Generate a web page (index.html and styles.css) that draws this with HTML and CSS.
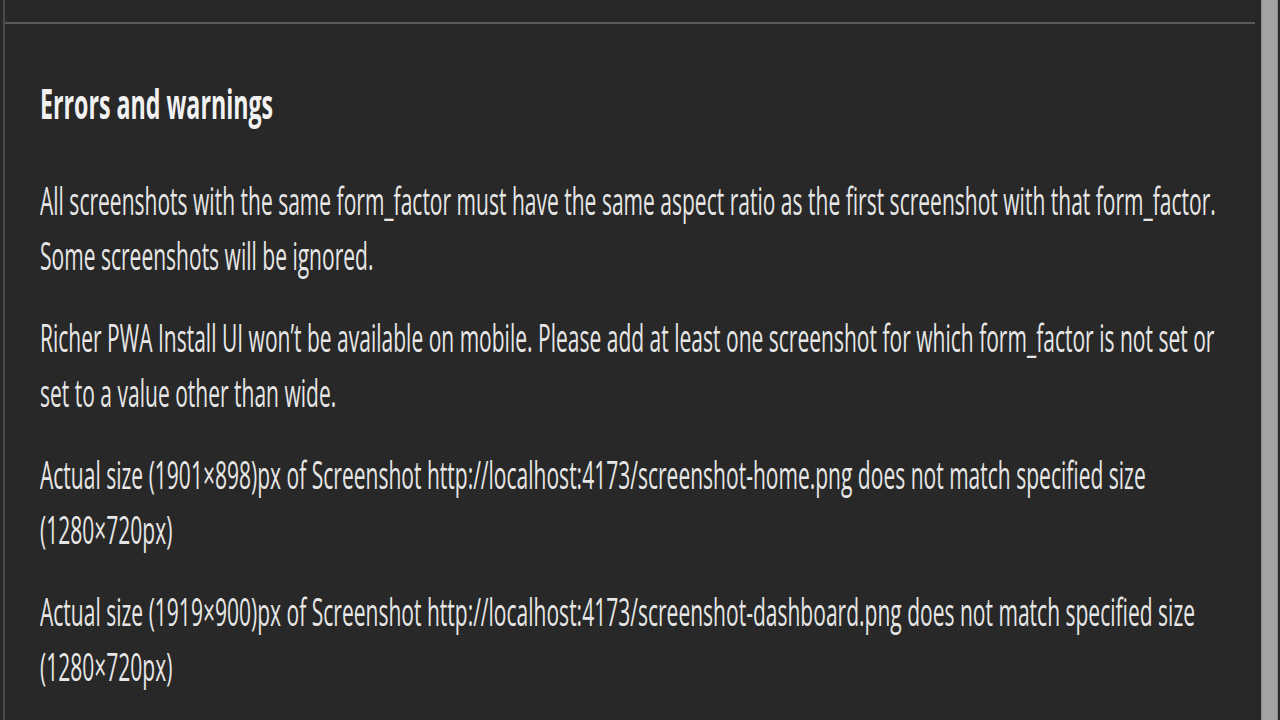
FILE: index.html
```html
<!DOCTYPE html>
<html lang="en">
<head>
<meta charset="utf-8">
<title>Errors and warnings</title>
<link rel="stylesheet" href="styles.css">
</head>
<body>
<div class="app">
  <div class="panel">
    <div class="toolbar"></div>
    <div class="content">
      <div class="text">
        <h2 class="heading">Errors and warnings</h2>
        <p class="msg">All screenshots with the same form_factor must have the same aspect ratio as the first screenshot with that form_factor.<br>Some screenshots will be ignored.</p>
        <p class="msg">Richer PWA Install UI won’t be available on mobile. Please add at least one screenshot for which form_factor is not set or<br>set to a value other than wide.</p>
        <p class="msg">Actual size (1901×898)px of Screenshot http://localhost:4173/screenshot-home.png does not match specified size<br>(1280×720px)</p>
        <p class="msg">Actual size (1919×900)px of Screenshot http://localhost:4173/screenshot-dashboard.png does not match specified size<br>(1280×720px)</p>
      </div>
    </div>
  </div>
  <div class="scrolltrack">
    <div class="thumb"></div>
  </div>
</div>
</body>
</html>
```

FILE: styles.css
```css
html, body {
  margin: 0;
  padding: 0;
  background: #282828;
  height: 720px;
  overflow: hidden;
}

.app {
  display: flex;
  height: 720px;
  width: 1280px;
}

.panel {
  flex: 0 0 1250px;
  margin-left: 3px;
  border-left: 2px solid #4a4a4a;
  display: flex;
  flex-direction: column;
  overflow: hidden;
}

.toolbar {
  height: 22px;
  flex: 0 0 22px;
  border-bottom: 2px solid #5a5a5a;
}

.content {
  padding: 54px 0 0 35px;
}

.text {
  width: 2300px;
  transform: scaleX(0.539);
  transform-origin: 0 0;
  font-family: "Open Sans", "Noto Sans", sans-serif;
  color: #e6e6e6;
}

.heading {
  margin: 0 0 44px 0;
  font-size: 42px;
  line-height: 50px;
  font-weight: 700;
  color: #f2f2f2;
  white-space: nowrap;
  transform: scaleX(1.025);
  transform-origin: 0 0;
}

.msg {
  margin: 0 0 27px 0;
  font-size: 39px;
  line-height: 55px;
  font-weight: 400;
  white-space: nowrap;
}

.scrolltrack {
  flex: 0 0 17px;
  margin-left: 6px;
  display: flex;
}

.thumb {
  flex: 1;
  background: #a3a3a3;
  border-left: 1px solid #8a8a8a;
  border-right: 1px solid #8a8a8a;
}
```
